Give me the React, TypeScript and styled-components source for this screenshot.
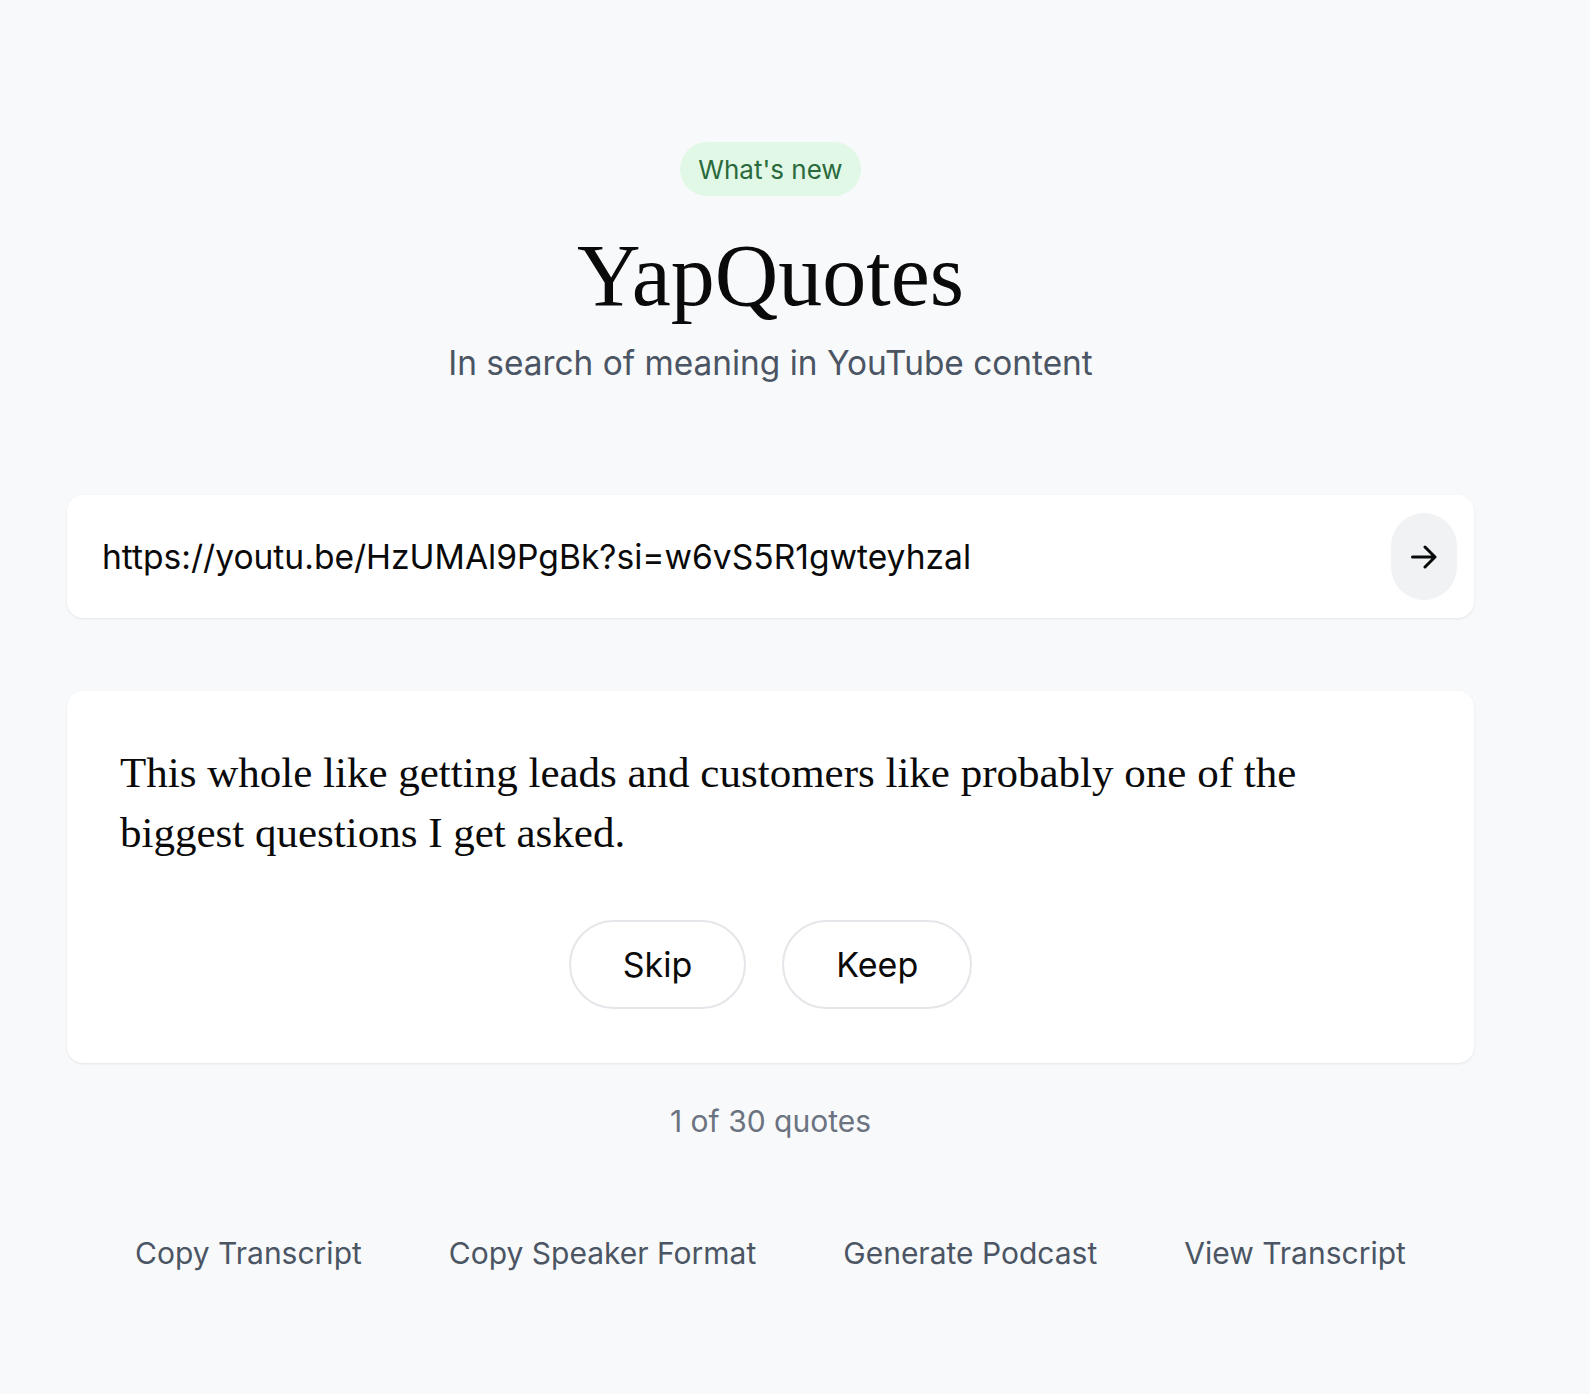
import React from "react";
import styled, { createGlobalStyle } from "styled-components";

const GlobalStyle = createGlobalStyle`
  html, body {
    margin: 0;
    padding: 0;
    background: #f8f9fb;
  }
  body {
    font-family: Inter, "Noto Sans", "Liberation Sans", sans-serif;
    color: #111111;
    -webkit-font-smoothing: antialiased;
  }
  * { box-sizing: border-box; }
`;

const Page = styled.main`
  width: 100%;
  min-height: 1394px;
  padding: 142px 49px 0 0;
  display: flex;
  flex-direction: column;
  align-items: center;
`;

const Column = styled.div`
  width: 1407px;
  display: flex;
  flex-direction: column;
  align-items: center;
`;

const Badge = styled.span`
  display: inline-flex;
  align-items: center;
  height: 54px;
  padding: 0 18px;
  border-radius: 27px;
  background: #e1f8e6;
  color: #2b6a3c;
  font-size: 26px;
`;

const Title = styled.h1`
  margin: 38px 0 0;
  font-family: "Liberation Serif", "Times New Roman", serif;
  font-weight: 400;
  font-size: 88px;
  line-height: 84px;
  color: #0a0a0a;
`;

const Subtitle = styled.p`
  margin: 22px 0 0;
  font-size: 33.4px;
  line-height: 47px;
  color: #4b5563;
`;

const Card = styled.section<{ $mt: number }>`
  width: 100%;
  margin-top: ${(p) => p.$mt}px;
  background: #ffffff;
  border-radius: 16px;
  box-shadow: 0 1px 3px rgba(15, 23, 42, 0.06), 0 1px 2px rgba(15, 23, 42, 0.03);
`;

const InputRow = styled.form`
  display: flex;
  align-items: center;
  gap: 16px;
  padding: 18px 17px 18px 35px;
`;

const UrlInput = styled.input`
  flex: 1;
  min-width: 0;
  border: none;
  outline: none;
  background: transparent;
  font-family: Inter, "Noto Sans", sans-serif;
  font-size: 33.6px;
  color: #0a0a0a;
  padding: 0;
`;

const GoButton = styled.button`
  width: 66px;
  height: 87px;
  border: none;
  border-radius: 33px;
  background: #f1f2f4;
  display: flex;
  align-items: center;
  justify-content: center;
  padding: 0;
  cursor: pointer;
`;

const QuoteBody = styled.div`
  padding: 52px 53px 54px;
  display: flex;
  flex-direction: column;
  align-items: center;
`;

const QuoteText = styled.blockquote`
  margin: 0;
  width: 100%;
  font-family: "Liberation Serif", "Times New Roman", serif;
  font-size: 43px;
  line-height: 60px;
  color: #0a0a0a;
`;

const Actions = styled.div`
  margin-top: 57px;
  display: flex;
  gap: 36px;
`;

const PillButton = styled.button`
  height: 89px;
  padding: 0 52px;
  border: 2px solid #e5e6ea;
  border-radius: 45px;
  background: #ffffff;
  font-family: Inter, "Noto Sans", sans-serif;
  font-size: 34px;
  color: #0a0a0a;
  cursor: pointer;
`;

const Counter = styled.p`
  margin: 36px 0 0;
  font-size: 30px;
  line-height: 45px;
  color: #6b7280;
`;

const FooterLinks = styled.nav`
  margin-top: 86px;
  display: flex;
  gap: 87px;
  justify-content: center;
`;

const FooterLink = styled.a`
  font-size: 30px;
  line-height: 47px;
  color: #4b5563;
  text-decoration: none;
  cursor: pointer;
`;

const ArrowIcon = () => (
  <svg width="26" height="24" viewBox="0 0 26 24" fill="none">
    <path
      d="M1.5 12H24M14 2l10 10-10 10"
      stroke="#0a0a0a"
      strokeWidth="3"
      strokeLinecap="round"
      strokeLinejoin="round"
    />
  </svg>
);

export default function App() {
  return (
    <>
      <GlobalStyle />
      <Page>
        <Column>
          <Badge>What's new</Badge>
          <Title>YapQuotes</Title>
          <Subtitle>In search of meaning in YouTube content</Subtitle>

          <Card $mt={108}>
            <InputRow onSubmit={(e) => e.preventDefault()}>
              <UrlInput
                defaultValue="https://youtu.be/HzUMAl9PgBk?si=w6vS5R1gwteyhzal"
                aria-label="YouTube URL"
              />
              <GoButton type="submit" aria-label="Submit">
                <ArrowIcon />
              </GoButton>
            </InputRow>
          </Card>

          <Card $mt={73}>
            <QuoteBody>
              <QuoteText>
                This whole like getting leads and customers like probably one of the
                biggest questions I get asked.
              </QuoteText>
              <Actions>
                <PillButton>Skip</PillButton>
                <PillButton>Keep</PillButton>
              </Actions>
            </QuoteBody>
          </Card>

          <Counter>1 of 30 quotes</Counter>

          <FooterLinks>
            <FooterLink>Copy Transcript</FooterLink>
            <FooterLink>Copy Speaker Format</FooterLink>
            <FooterLink>Generate Podcast</FooterLink>
            <FooterLink>View Transcript</FooterLink>
          </FooterLinks>
        </Column>
      </Page>
    </>
  );
}
